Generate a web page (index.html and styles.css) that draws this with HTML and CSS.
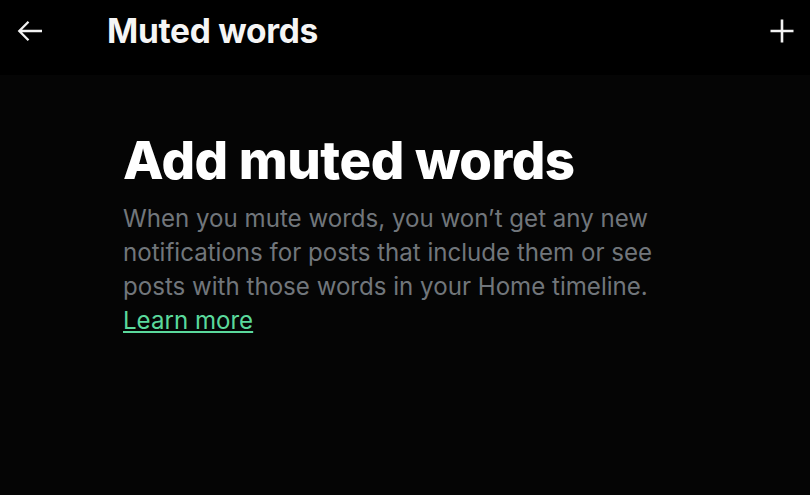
FILE: index.html
```html
<!DOCTYPE html>
<html lang="en">
<head>
<meta charset="utf-8">
<title>Muted words</title>
<link rel="stylesheet" href="styles.css">
</head>
<body>
<div class="page">
  <header class="topbar">
    <button class="icon-btn back" aria-label="Back">
      <svg viewBox="0 0 26 22" width="26" height="22"><path d="M25 11H2.5M11.5 1.8L2.3 11l9.2 9.2" fill="none" stroke="currentColor" stroke-width="2.3"/></svg>
    </button>
    <h2 class="title">Muted words</h2>
    <button class="icon-btn add" aria-label="Add">
      <svg viewBox="0 0 24 24" width="24" height="24"><path d="M12 0.5v23M0.5 12h23" fill="none" stroke="currentColor" stroke-width="2.6"/></svg>
    </button>
  </header>
  <main class="content">
    <h1 class="heading">Add muted words</h1>
    <p class="desc">When you mute words, you won’t get any new notifications for posts that include them or see posts with those words in your Home timeline. <a class="link" href="#">Learn more</a></p>
  </main>
</div>
</body>
</html>
```

FILE: styles.css
```css
html, body {
  margin: 0;
  padding: 0;
  background: #050505;
  height: 100%;
}
.page {
  font-family: "Inter", "Liberation Sans", sans-serif;
  color: #e7e9ea;
  min-height: 100%;
}
.topbar {
  height: 75px;
  box-sizing: border-box;
  background: #000;
  display: flex;
  align-items: center;
  padding: 0 16px 13px 17px;
}
.icon-btn {
  background: none;
  border: 0;
  padding: 0;
  color: #f2f2f2;
  display: flex;
  align-items: center;
  justify-content: center;
}
.title {
  margin: 0 0 0 64px;
  font-size: 33.5px;
  font-weight: 700;
  letter-spacing: -0.3px;
  color: #f5f5f5;
  flex: 1;
}
.content {
  padding: 53px 0 0 123px;
  width: 580px;
}
.heading {
  margin: 0;
  font-size: 52.8px;
  line-height: 64px;
  font-weight: 800;
  letter-spacing: -0.5px;
  color: #fff;
}
.desc {
  margin: 10px 0 0;
  font-size: 24.1px;
  line-height: 34px;
  color: #71767b;
}
.link {
  color: #5ad99c;
  text-decoration: underline;
}
```
